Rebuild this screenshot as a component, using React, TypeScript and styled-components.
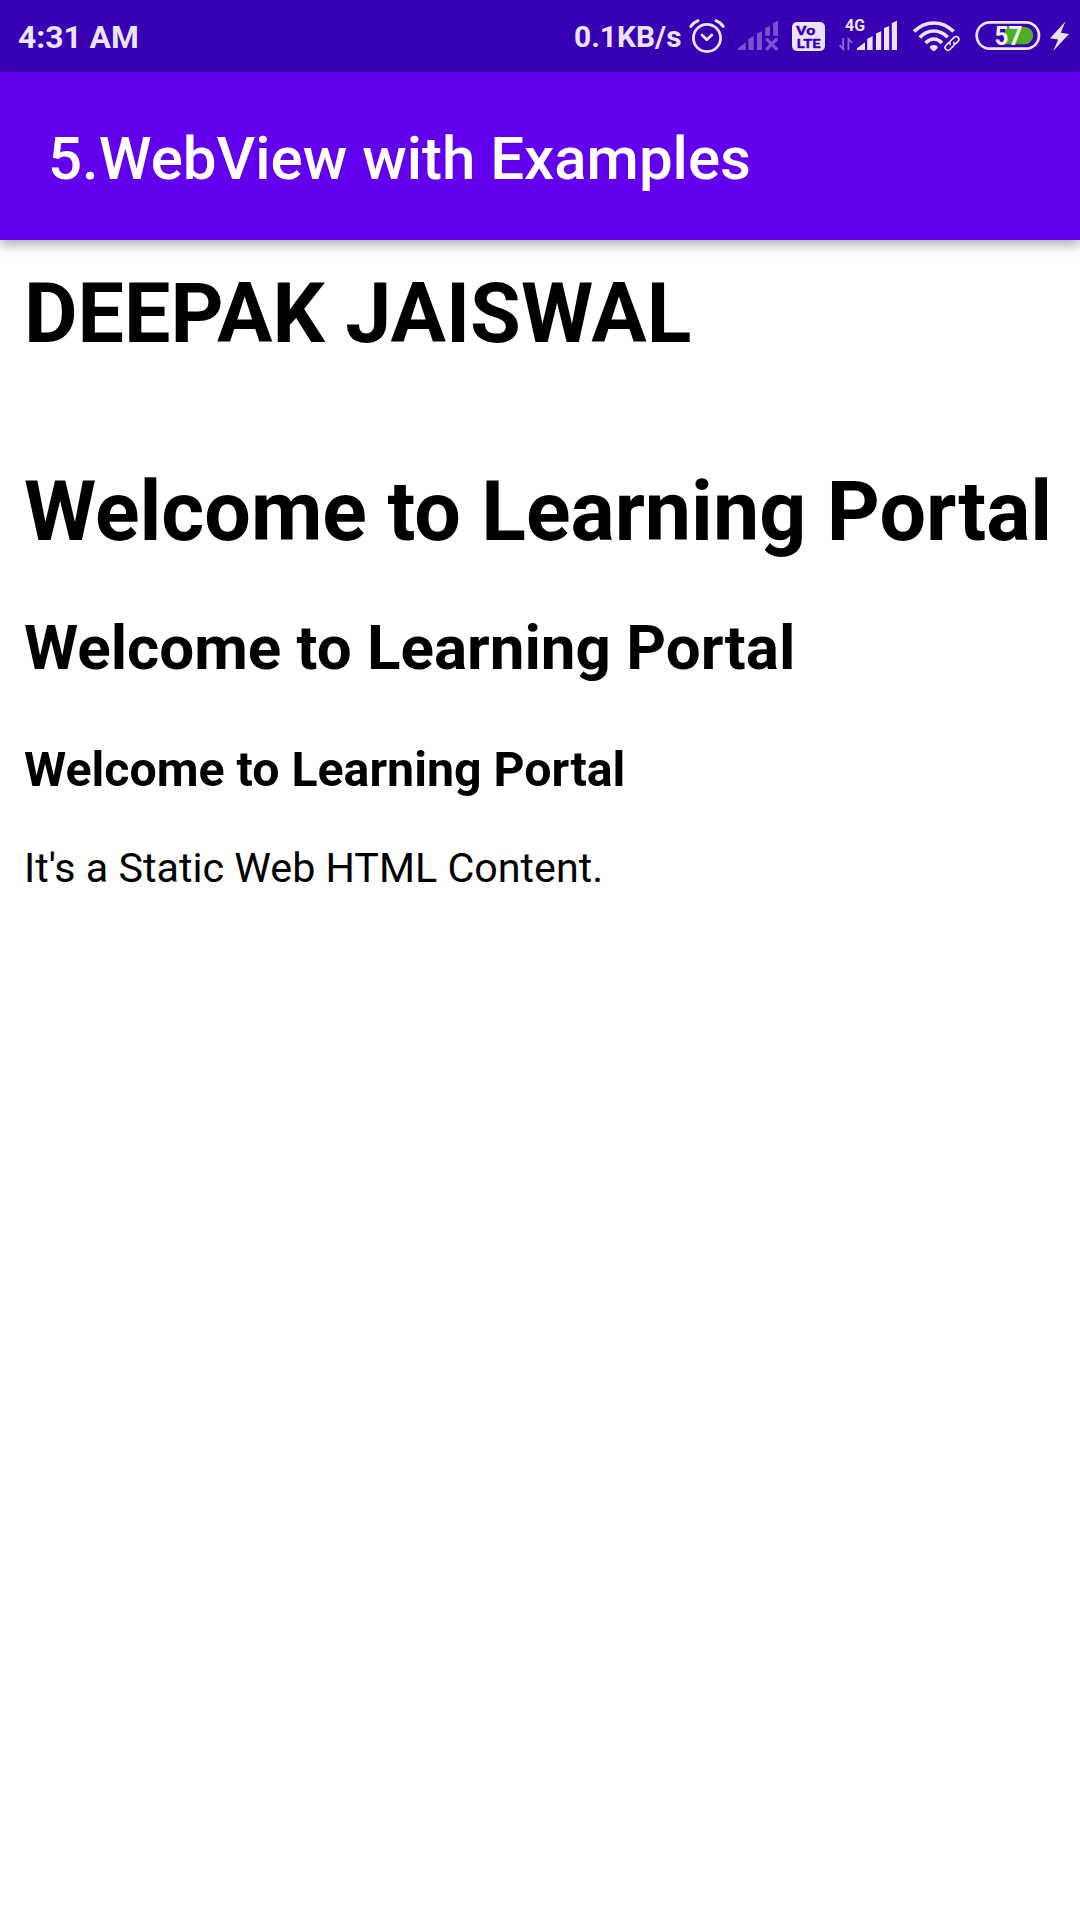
import React from "react";
import styled, { createGlobalStyle } from "styled-components";

const LIGHT = "#ebe3fa";
const DIM = "#7c52cf";
const STATUS = "#3700b3";
const FONT = 'Roboto, "Liberation Sans", sans-serif';

const GlobalStyle = createGlobalStyle`
  body { margin: 0; background: #fff; font-family: ${FONT}; }
`;

const Screen = styled.div`
  display: flex;
  flex-direction: column;
  min-height: 1920px;
  background: #fff;
`;

const StatusBar = styled.div`
  display: flex;
  align-items: center;
  justify-content: space-between;
  height: 72px;
  padding: 0 6px 0 18px;
  background: ${STATUS};
  color: ${LIGHT};
`;

const StatusGroup = styled.div`
  display: flex;
  align-items: center;
  height: 72px;
`;

const StatusText = styled.span<{ $size: number; $gap?: number }>`
  margin-right: ${(p) => p.$gap ?? 0}px;
  padding-top: 2px;
  font-size: ${(p) => p.$size}px;
  font-weight: 700;
  line-height: 72px;
  white-space: nowrap;
`;

const StatusIcon = styled.svg`
  display: block;
  flex: none;
  font-family: ${FONT};
  font-weight: 700;
`;

const AppBar = styled.header`
  display: flex;
  align-items: center;
  height: 168px;
  padding: 5px 48px 0;
  box-sizing: border-box;
  background: #6200ee;
  box-shadow: 0 5px 11px rgba(0, 0, 0, 0.32);
  color: #fff;
`;

const AppTitle = styled.div`
  font-size: 60px;
  font-weight: 500;
  line-height: 70px;
  white-space: nowrap;
`;

const Page = styled.main`
  display: flex;
  flex-direction: column;
  padding: 25px 0 0 24px;
  color: #000;
`;

const Heading = styled.h1<{ $size: number; $line: number; $gap: number }>`
  margin: 0 0 ${(p) => p.$gap}px;
  font-size: ${(p) => p.$size}px;
  line-height: ${(p) => p.$line}px;
  font-weight: 700;
  white-space: nowrap;
`;

const Paragraph = styled.p`
  margin: 0;
  font-size: 41.25px;
  line-height: 49px;
  white-space: nowrap;
`;

function Icon({ x, width, children }: { x: number; width: number; children: React.ReactNode }) {
  return (
    <StatusIcon width={width} height={72} viewBox={`${x} 0 ${width} 72`} fill="none">
      {children}
    </StatusIcon>
  );
}

function AlarmIcon() {
  return (
    <Icon x={684} width={48}>
      <g stroke={LIGHT} strokeWidth="2.8" strokeLinecap="round" strokeLinejoin="round">
        <circle cx="707" cy="38" r="13.6" />
        <path d="M690.8 26.4Q693.4 22.6 698 20.7M723.2 26.4Q720.6 22.6 716 20.7" strokeWidth="3" />
        <path d="M702 35L706.8 39.8L711.8 35" />
      </g>
    </Icon>
  );
}

function NoSignalIcon() {
  return (
    <Icon x={732} width={54}>
      <g fill={DIM}>
        <path d="M738 50V48.2L745.8 42.3V50ZM748.4 50V39L753.6 36V50ZM757 50V33.5L762 31.3V50ZM765.2 35.8V28L770 26V35.8ZM773.2 35.8V23L778 20.8V35.8Z" />
      </g>
      <path d="M767 39.5L776.3 48.8M776.3 39.5L767 48.8" stroke={DIM} strokeWidth="3.2" strokeLinecap="round" />
    </Icon>
  );
}

function VolteIcon() {
  return (
    <Icon x={786} width={48}>
      <rect x="792" y="22" width="33" height="29" rx="5" fill={LIGHT} />
      <g fill={STATUS} stroke={STATUS} strokeWidth="0.35" strokeLinejoin="round">
        <text x="796.1" y="34.6" fontSize="12.6" textLength="19.3" lengthAdjust="spacingAndGlyphs">Vo</text>
        <text x="796.8" y="47.7" fontSize="13.2" textLength="23.8" lengthAdjust="spacingAndGlyphs">LTE</text>
      </g>
    </Icon>
  );
}

function MobileSignalIcon() {
  return (
    <Icon x={834} width={72}>
      <text x="845" y="30.8" fontSize="15.6" fill={LIGHT} textLength="20" lengthAdjust="spacingAndGlyphs">4G</text>
      <path d="M843.2 38V49L839.6 45.2M848.4 50V39L852 42.8" stroke="#8e6bd6" strokeWidth="1.8" />
      <path
        fill={LIGHT}
        d="M857 50V48.2L865 42.3V50ZM867.2 50V39L872.6 36V50ZM876 50V33.5L881.2 31.3V50ZM884 50V28L889.2 26V50ZM891.8 50V23L897 20.8V50Z"
      />
    </Icon>
  );
}

function WifiIcon() {
  return (
    <Icon x={906} width={60}>
      <g stroke={LIGHT} strokeWidth="3.6">
        <path d="M914 31.6Q922.5 23 933.8 23T953.6 31.6" />
        <path d="M919.8 37.4Q925.8 31 933.8 31T947.6 37.2" />
        <path d="M925.6 43Q929.4 39 933.8 39T942 43" />
      </g>
      <path
        fill={LIGHT}
        d="M930.4 46Q933.8 43.8 937.2 46Q938.2 47 937.2 48.4L935.2 50.5Q933.8 51.6 932.4 50.5L930.4 48.4Q929.4 47 930.4 46Z"
      />
      <g transform="translate(952 43.4) rotate(-45)" stroke={LIGHT} strokeWidth="1.7" strokeLinecap="round">
        <path d="M-1.4 -2.8H-5.8A2.8 2.8 0 0 0 -5.8 2.8H-.6A2.8 2.8 0 0 0 2 .6" />
        <path d="M1.4 2.8H5.8A2.8 2.8 0 0 0 5.8 -2.8H.6A2.8 2.8 0 0 0 -2 -.6" />
      </g>
    </Icon>
  );
}

function BatteryIcon() {
  return (
    <Icon x={966} width={108}>
      <rect x="976.7" y="22.3" width="62.3" height="26.4" rx="13.2" stroke={LIGHT} strokeWidth="2.7" />
      <path d="M1005 26.8H1024.5A8.7 8.7 0 0 1 1024.5 44.2H1005Z" fill="#4caf24" />
      <text x="994.6" y="44.8" fontSize="25.2" fill="#f6f2fd" textLength="28" lengthAdjust="spacingAndGlyphs">57</text>
      <path d="M1065.4 21.6L1050 38.2L1058.2 39.4L1053.2 51L1069 34L1060.8 32.8Z" fill={LIGHT} />
    </Icon>
  );
}

export default function App() {
  return (
    <>
      <GlobalStyle />
      <Screen>
        <StatusBar>
          <StatusText $size={31.8}>4:31 AM</StatusText>
          <StatusGroup>
            <StatusText $size={29.9} $gap={2.5}>0.1KB/s</StatusText>
            <AlarmIcon />
            <NoSignalIcon />
            <VolteIcon />
            <MobileSignalIcon />
            <WifiIcon />
            <BatteryIcon />
          </StatusGroup>
        </StatusBar>
        <AppBar>
          <AppTitle>5.WebView with Examples</AppTitle>
        </AppBar>
        <Page>
          <Heading $size={82.5} $line={97} $gap={101}>DEEPAK JAISWAL</Heading>
          <Heading $size={82.5} $line={97} $gap={52}>Welcome to Learning Portal</Heading>
          <Heading as="h2" $size={61.9} $line={73} $gap={56}>Welcome to Learning Portal</Heading>
          <Heading as="h3" $size={48.25} $line={57} $gap={46}>Welcome to Learning Portal</Heading>
          <Paragraph>It's a Static Web HTML Content.</Paragraph>
        </Page>
      </Screen>
    </>
  );
}
